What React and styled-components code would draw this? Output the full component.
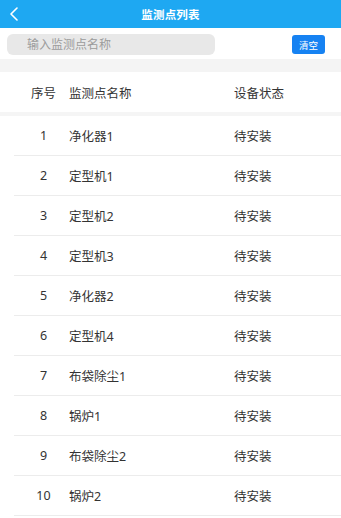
import styled, { createGlobalStyle } from "styled-components";

/* ======================
   GLOBAL
====================== */

const GlobalStyle = createGlobalStyle`
  html, body {
    margin: 0;
    padding: 0;
    background: #fff;
  }
  body {
    font-family: "Noto Sans", "Noto Sans CJK SC", sans-serif;
    color: #333;
  }
  * { box-sizing: border-box; }
`;

/* ======================
   STYLED COMPONENTS
====================== */

const Page = styled.div`
  width: 341px;
  min-height: 518px;
  background: #fff;
`;

const NavBar = styled.header`
  height: 28px;
  background: #1ea8f2;
  display: grid;
  grid-template-columns: 1fr auto 1fr;
  align-items: center;
`;

const BackButton = styled.button`
  justify-self: start;
  background: none;
  border: none;
  padding: 0 0 0 9px;
  height: 28px;
  display: flex;
  align-items: center;
  cursor: pointer;
`;

const Title = styled.h1`
  margin: 0;
  font-size: 11.5px;
  font-weight: 700;
  color: #fff;
  letter-spacing: 0.2px;
`;

const SearchBar = styled.div`
  display: flex;
  align-items: center;
  padding: 6px 16px 4px 7px;
`;

const SearchInput = styled.input`
  width: 208px;
  height: 21px;
  border: none;
  border-radius: 6px;
  background: #e8e8e8;
  padding: 0 0 0 20px;
  font-family: inherit;
  font-size: 12px;
  color: #333;
  outline: none;

  &::placeholder {
    color: #9c9c9c;
  }
`;

const ClearButton = styled.button`
  margin-left: auto;
  width: 33px;
  height: 19px;
  border: none;
  border-radius: 3px;
  background: #1682f2;
  color: #fff;
  font-family: inherit;
  font-size: 9.5px;
  padding: 0;
  cursor: pointer;
`;

const Divider = styled.div`
  height: 13px;
  background: #f4f4f4;
`;

const Row = styled.div`
  display: grid;
  grid-template-columns: 51px 165px 1fr;
  align-items: center;
  height: 40px;
  padding-left: 4px;
  margin-left: 14px;
  font-size: 12.5px;
  color: #333;
  border-bottom: 1px solid #ececec;
`;

const HeadRow = styled(Row)`
  height: 44px;
  margin-left: 0;
  padding-left: 18px;
  border-bottom: 4px solid #f5f5f5;
`;

const Num = styled.span`
  text-align: center;
`;

const Cell = styled.span`
  white-space: nowrap;
`;

/* ======================
   DATA
====================== */

const points = [
  "净化器1",
  "定型机1",
  "定型机2",
  "定型机3",
  "净化器2",
  "定型机4",
  "布袋除尘1",
  "锅炉1",
  "布袋除尘2",
  "锅炉2",
];

/* ======================
   COMPONENT
====================== */

const App = () => (
  <>
    <GlobalStyle />
    <Page>
      <NavBar>
        <BackButton aria-label="返回">
          <svg width="10" height="14" viewBox="0 0 10 14">
            <polyline
              points="8,1 2,7 8,13"
              fill="none"
              stroke="#fff"
              strokeWidth="1.6"
              strokeLinecap="round"
              strokeLinejoin="round"
            />
          </svg>
        </BackButton>
        <Title>监测点列表</Title>
        <span />
      </NavBar>

      <SearchBar>
        <SearchInput placeholder="输入监测点名称" />
        <ClearButton>清空</ClearButton>
      </SearchBar>

      <Divider />

      <HeadRow>
        <Num>序号</Num>
        <Cell>监测点名称</Cell>
        <Cell>设备状态</Cell>
      </HeadRow>

      {points.map((name, i) => (
        <Row key={i}>
          <Num>{i + 1}</Num>
          <Cell>{name}</Cell>
          <Cell>待安装</Cell>
        </Row>
      ))}
    </Page>
  </>
);

export default App;
